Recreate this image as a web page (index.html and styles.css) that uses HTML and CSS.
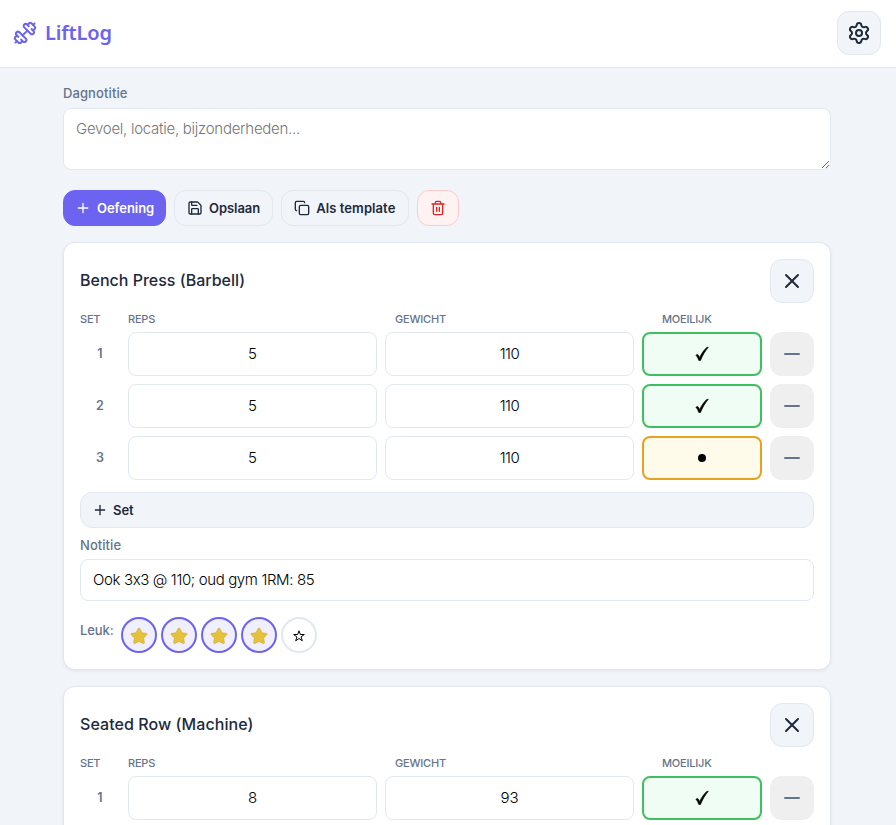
FILE: index.html
```html
<!DOCTYPE html>
<html lang="nl">
<head>
<meta charset="utf-8">
<title>LiftLog</title>
<link rel="stylesheet" href="styles.css">
</head>
<body>
<svg class="sprite" aria-hidden="true">
  <symbol id="plus" viewBox="0 0 24 24"><path d="M5 12h14M12 5v14"/></symbol>
  <symbol id="minus" viewBox="0 0 24 24"><path d="M5 12h14"/></symbol>
  <symbol id="x" viewBox="0 0 24 24"><path d="M18 6 6 18M6 6l12 12"/></symbol>
  <symbol id="check" viewBox="0 0 16 16"><path d="M1.900 9.200c1.200-.9 2.200-.8 2.900.6l.8 1.900C7.600 7.200 10 3.900 13 1.300h1.300C11.100 5.200 8.400 9.700 6.500 14.500H4.800C4 12.300 3.200 10.500 1.900 9.200z"/></symbol>
  <symbol id="star" viewBox="0 0 18 18"><path d="M9 1.100c.5 0 .8.300 1.100.900l1.800 3.700 4.200.6c1 .2 1.300 1 .5 1.800l-3 2.900.8 4.300c.2 1.100-.5 1.600-1.400 1.100L9 14.500l-4 1.900c-.9.500-1.600 0-1.400-1.100l.8-4.300-3-2.900C.6 7.300.9 6.500 1.900 6.300l4.200-.6L7.900 2c.3-.6.6-.9 1.100-.9z"/></symbol>
</svg>
<header class="topbar">
  <div class="brand">
    <svg class="icon icon-lg" viewBox="0 0 24 24"><path d="M17.596 12.768a2 2 0 1 0 2.829-2.829l-1.768-1.767a2 2 0 0 0 2.828-2.829l-2.828-2.828a2 2 0 0 0-2.829 2.828l-1.767-1.768a2 2 0 1 0-2.829 2.829z"/><path d="m2.500 21.500 1.400-1.400"/><path d="m20.100 3.900 1.400-1.400"/><path d="M5.343 21.485a2 2 0 1 0 2.829-2.828l1.767 1.768a2 2 0 1 0 2.829-2.829l-6.364-6.364a2 2 0 1 0-2.829 2.829l1.768 1.767a2 2 0 0 0-2.828 2.829z"/><path d="m9.600 14.400 4.800-4.800"/></svg>
    <span>LiftLog</span>
  </div>
  <button class="square"><svg class="icon icon-lg" viewBox="0 0 24 24"><path d="M9.671 4.136a2.340 2.340 0 0 1 4.659 0 2.340 2.340 0 0 0 3.319 1.915 2.340 2.340 0 0 1 2.330 4.033 2.340 2.340 0 0 0 0 3.831 2.340 2.340 0 0 1-2.330 4.033 2.340 2.340 0 0 0-3.319 1.915 2.340 2.340 0 0 1-4.659 0 2.340 2.340 0 0 0-3.320-1.915 2.340 2.340 0 0 1-2.330-4.033 2.340 2.340 0 0 0 0-3.831A2.340 2.340 0 0 1 6.350 6.051a2.340 2.340 0 0 0 3.319-1.915"/><circle cx="12" cy="12" r="3"/></svg></button>
</header>
<main class="content">
  <label class="label day-label" for="day">Dagnotitie</label>
  <textarea id="day" class="daynote" placeholder="Gevoel, locatie, bijzonderheden..."></textarea>
  <div class="actions">
    <button class="btn primary"><svg class="icon"><use href="#plus"/></svg><span>Oefening</span></button>
    <button class="btn"><svg class="icon" viewBox="0 0 24 24"><path d="M15.200 3a2 2 0 0 1 1.400.6l3.800 3.800a2 2 0 0 1 .6 1.400V19a2 2 0 0 1-2 2H5a2 2 0 0 1-2-2V5a2 2 0 0 1 2-2z"/><path d="M17 21v-7a1 1 0 0 0-1-1H8a1 1 0 0 0-1 1v7M7 3v4a1 1 0 0 0 1 1h7"/></svg><span>Opslaan</span></button>
    <button class="btn template"><svg class="icon" viewBox="0 0 24 24"><rect x="8" y="8" width="14" height="14" rx="2"/><path d="M4 16c-1.100 0-2-.9-2-2V4c0-1.100.9-2 2-2h10c1.100 0 2 .9 2 2"/></svg><span>Als template</span></button>
    <button class="btn danger"><svg class="icon" viewBox="0 0 24 24"><path d="M3 6h18M19 6v14a2 2 0 0 1-2 2H7a2 2 0 0 1-2-2V6M8 6V4a2 2 0 0 1 2-2h4a2 2 0 0 1 2 2v2M10 11v6M14 11v6"/></svg></button>
  </div>

  <section class="card">
    <div class="card-head"><h2>Bench Press (Barbell)</h2><button class="square"><svg class="icon icon-lg"><use href="#x"/></svg></button></div>
    <div class="cols"><span>SET</span><span>REPS</span><span>GEWICHT</span><span>MOEILIJK</span></div>
    <div class="rows">
      <div class="row"><span class="num">1</span><input value="5"><input class="kg" value="110"><button class="level good"><svg class="check"><use href="#check"/></svg></button><button class="remove"><svg class="icon icon-lg"><use href="#minus"/></svg></button></div>
      <div class="row"><span class="num">2</span><input value="5"><input class="kg" value="110"><button class="level good"><svg class="check"><use href="#check"/></svg></button><button class="remove"><svg class="icon icon-lg"><use href="#minus"/></svg></button></div>
      <div class="row"><span class="num">3</span><input value="5"><input class="kg" value="110"><button class="level mid"><i class="dot"></i></button><button class="remove"><svg class="icon icon-lg"><use href="#minus"/></svg></button></div>
    </div>
    <button class="btn add"><svg class="icon"><use href="#plus"/></svg><span>Set</span></button>
    <label class="label" for="note">Notitie</label>
    <input id="note" class="note" value="Ook 3x3 @ 110; oud gym 1RM: 85">
    <div class="rating">
      <span class="label">Leuk:</span>
      <button class="star on"><svg><use href="#star"/></svg></button>
      <button class="star on"><svg><use href="#star"/></svg></button>
      <button class="star on"><svg><use href="#star"/></svg></button>
      <button class="star on"><svg><use href="#star"/></svg></button>
      <button class="star"><svg viewBox="0 0 14 14"><path d="M7 1.800 8.300 5.500h4L9.100 7.900l1.200 3.900L7 9.500l-3.300 2.300 1.200-3.900L1.700 5.500h4z"/></svg></button>
    </div>
  </section>

  <section class="card">
    <div class="card-head"><h2 class="wide">Seated Row (Machine)</h2><button class="square"><svg class="icon icon-lg"><use href="#x"/></svg></button></div>
    <div class="cols"><span>SET</span><span>REPS</span><span>GEWICHT</span><span>MOEILIJK</span></div>
    <div class="rows">
      <div class="row"><span class="num">1</span><input value="8"><input value="93"><button class="level good"><svg class="check"><use href="#check"/></svg></button><button class="remove"><svg class="icon icon-lg"><use href="#minus"/></svg></button></div>
    </div>
  </section>
</main>
</body>
</html>
```
FILE: styles.css
```css
* { box-sizing: border-box; }
html { height: 100%; overflow: hidden; }
body {
  margin: 0;
  height: 100%;
  overflow: hidden;
  background: #f1f5f9;
  color: #1e293b;
  font-family: Inter, "Liberation Sans", sans-serif;
  font-size: 15px;
  font-feature-settings: "calt" 0;
}
button, input, textarea { font: inherit; font-feature-settings: inherit; margin: 0; }
.sprite { display: none; }
.icon {
  width: 16px;
  height: 16px;
  flex: none;
  fill: none;
  stroke: currentColor;
  stroke-width: 2;
  stroke-linecap: round;
  stroke-linejoin: round;
}
.icon-lg { width: 24px; height: 24px; }

.topbar {
  display: flex;
  align-items: center;
  justify-content: space-between;
  height: 68px;
  padding: 0 15px 1px 13px;
  background: #fff;
  border-bottom: 1px solid #e2e8f0;
}
.brand {
  display: flex;
  align-items: center;
  gap: 8px;
  color: #6c63f0;
  font-family: "Noto Sans", "Open Sans", sans-serif;
  font-size: 20px;
  font-weight: 600;
  letter-spacing: -0.15px;
}
.brand span { padding-bottom: 2px; }
.square {
  display: grid;
  place-items: center;
  width: 44px;
  height: 44px;
  padding: 0;
  border: 1px solid #e2e8f0;
  border-radius: 12px;
  background: #f1f5f9;
  color: #1e293b;
}

.content { width: 768px; margin-left: 63px; padding-top: 16px; }
.label {
  display: block;
  height: 18px;
  line-height: 17px;
  color: #64748b;
  font-size: 13px;
  font-weight: 550;
  letter-spacing: 0.06px;
}
.day-label { line-height: 18px; letter-spacing: 0.1px; }
.daynote {
  display: block;
  width: 100%;
  height: 62px;
  margin-top: 6px;
  padding: 9px 12px;
  border: 1px solid #e2e8f0;
  border-radius: 8px;
  background: #fff;
  font-weight: 350;
  line-height: 22px;
  resize: vertical;
  letter-spacing: -0.27px;
}
.daynote::placeholder { color: #757575; }

.actions { display: flex; gap: 8px; margin: 20px 0 16px; }
.btn {
  display: flex;
  align-items: center;
  gap: 6px;
  height: 36px;
  padding: 0 12px;
  border: 1px solid #e2e8f0;
  border-radius: 12px;
  background: #f1f5f9;
  color: #1e293b;
  font-size: 13px;
  font-weight: 600;
  letter-spacing: -0.05px;
  white-space: nowrap;
}
.primary { width: 103px; padding: 0 11px; border-color: #6c63f0; background: #6c63f0; color: #fff; }
.template { width: 128px; letter-spacing: 0.08px; }
.danger { width: 42px; border-color: #fecaca; background: #fef2f2; color: #dc2626; }

.card {
  margin-bottom: 16px;
  padding: 16px;
  border: 1px solid #e2e8f0;
  border-radius: 12px;
  background: #fff;
  box-shadow: 0 1px 3px rgba(15, 23, 42, 0.08);
}
.card-head { display: flex; align-items: center; justify-content: space-between; }
.card-head h2 { margin: 0; padding-bottom: 2px; font-size: 16px; font-weight: 550; letter-spacing: 0; }
.card-head .wide { letter-spacing: 0.06px; }
.cols {
  display: grid;
  grid-template-columns: 40px 1fr 1fr 152px;
  gap: 8px;
  height: 17px;
  margin: 8px 0 4px;
  color: #64748b;
  font-size: 11px;
  font-weight: 500;
  letter-spacing: -0.2px;
  line-height: 17px;
}
.rows { display: grid; gap: 8px; }
.row {
  display: grid;
  grid-template-columns: 40px 1fr 1fr 120px 44px;
  gap: 8px;
  height: 44px;
}
.row input {
  width: 100%;
  min-width: 0;
  height: 44px;
  padding: 0 0 1px;
  text-align: center;
}
.row input, .note {
  border: 1px solid #e2e8f0;
  border-radius: 8px;
  background: #fff;
  color: #000;
  font-weight: 350;
}
.row .kg { letter-spacing: -0.5px; }
.num { align-self: center; padding-bottom: 1px; text-align: center; color: #64748b; font-size: 12.5px; font-weight: 600; }
.level { display: grid; place-items: center; padding: 0; border: 2px solid; border-radius: 8px; }
.good { border-color: #40bf60; background: #f0fdf4; }
.mid { border-color: #eaa023; background: #fffbeb; }
.check { width: 16px; height: 16px; fill: #000; stroke: #000; stroke-width: 0.6; }
.dot { width: 8px; height: 8px; border-radius: 50%; background: #000; }
.remove {
  display: grid;
  place-items: center;
  padding: 0;
  border: 0;
  border-radius: 12px;
  background: #efefef;
  color: #64748b;
}
.add { width: 100%; margin: 12px 0 9px; padding: 0 11px 1px; gap: 5px; }
.note {
  display: block;
  width: 100%;
  height: 42px;
  margin-top: 4px;
  padding: 0 12px 1px;
  letter-spacing: -0.37px;
}
.rating { display: flex; gap: 4px; margin-top: 16px; }
.rating .label { width: 37px; margin-top: 5px; font-weight: 500; letter-spacing: -0.1px; }
.star {
  display: grid;
  place-items: center;
  width: 36px;
  height: 36px;
  padding: 2px 0 0;
  border: 2px solid #e2e8f0;
  border-radius: 50%;
  background: #fff;
}
.star svg { width: 14px; height: 14px; fill: none; stroke: #000; stroke-width: 1; }
.star.on { border-color: #6c63f0; background: #f0effe; }
.star.on svg { width: 18px; height: 18px; fill: #e6c23b; stroke: #d0a72e; stroke-width: 0.6; }
```
